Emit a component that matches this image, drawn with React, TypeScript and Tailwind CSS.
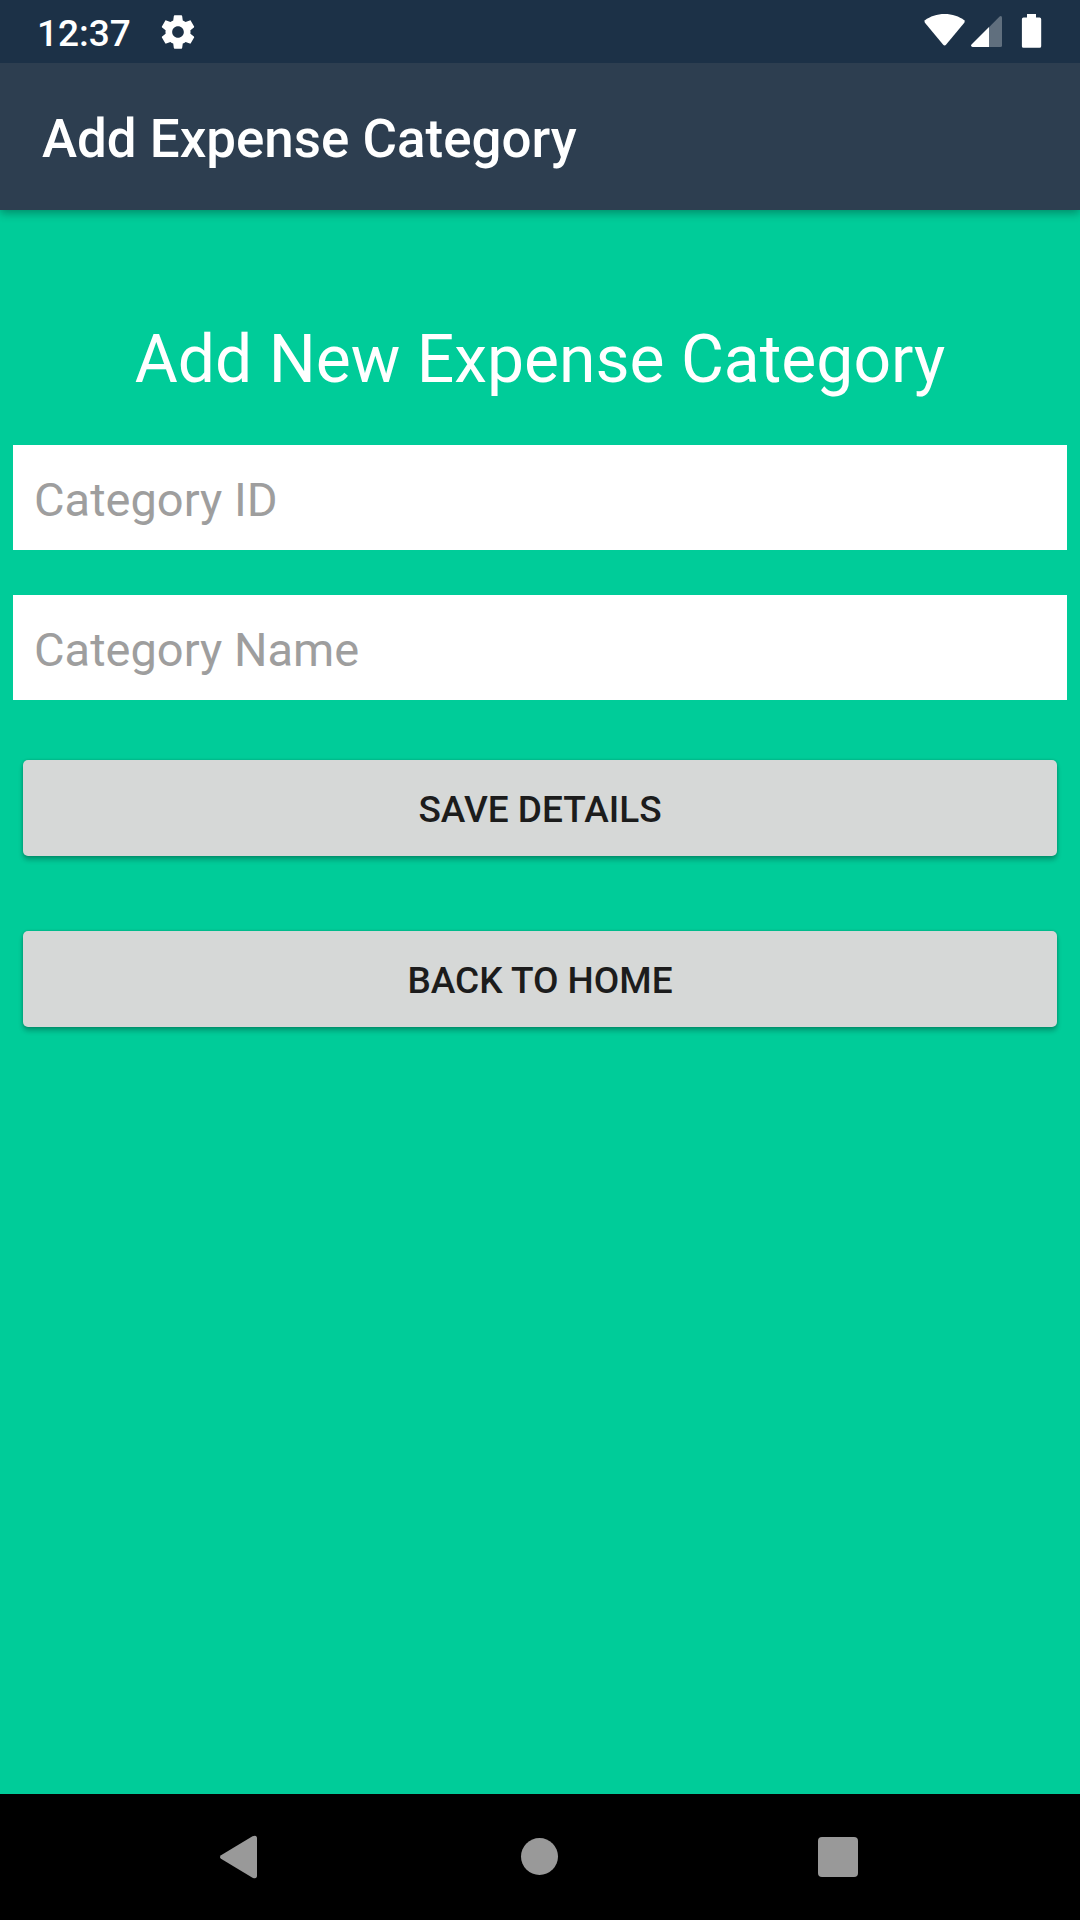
import React from "react";

function GearIcon() {
  return (
    <svg className="h-10 w-10" viewBox="0 0 24 24" fill="#fff">
      <path d="M19.43 12.98c.04-.32.07-.64.07-.98s-.03-.66-.07-.98l2.11-1.65c.19-.15.24-.42.12-.64l-2-3.46c-.12-.22-.39-.3-.61-.22l-2.49 1c-.52-.4-1.08-.73-1.69-.98l-.38-2.65C14.46 2.18 14.25 2 14 2h-4c-.25 0-.46.18-.49.42l-.38 2.65c-.61.25-1.17.59-1.69.98l-2.49-1c-.23-.09-.49 0-.61.22l-2 3.46c-.13.22-.07.49.12.64l2.11 1.65c-.04.32-.07.65-.07.98s.03.66.07.98l-2.11 1.65c-.19.15-.24.42-.12.64l2 3.46c.12.22.39.3.61.22l2.49-1c.52.4 1.08.73 1.69.98l.38 2.65c.03.24.24.42.49.42h4c.25 0 .46-.18.49-.42l.38-2.65c.61-.25 1.17-.59 1.69-.98l2.49 1c.23.09.49 0 .61-.22l2-3.46c.12-.22.07-.49-.12-.64l-2.11-1.65zM12 15.5c-1.93 0-3.5-1.57-3.5-3.5s1.57-3.5 3.5-3.5 3.5 1.57 3.5 3.5-1.57 3.5-3.5 3.5z" />
    </svg>
  );
}

function StatusIcons() {
  return (
    <svg className="h-[63px] w-[180px]" viewBox="900 0 180 63">
      <path
        d="M925 20.200C930 16.500 937 14 944.600 14S959.300 16.500 964.200 20.200Q965.200 21.400 964.300 22.800L946.200 44.600Q944.600 46.300 943 44.600L924.900 22.800Q924 21.400 925 20.200Z"
        fill="#fff"
      />
      <path d="M989 27.200L999.600 16.500Q1002 15.200 1002 18V45.500Q1002 47 1000.500 47H989Z" fill="#fff" fillOpacity="0.3" />
      <path d="M989 27V47H972.500Q970.200 46.300 971.500 44.500Z" fill="#fff" />
      <path d="M1027 14H1036V17.600H1039.600Q1041.200 17.600 1041.200 19.200V46.200Q1041.200 47.800 1039.600 47.800H1023.500Q1021.900 47.800 1021.900 46.200V19.200Q1021.900 17.600 1023.500 17.600H1027Z" fill="#fff" />
    </svg>
  );
}

function Field({ label }: { label: string }) {
  return (
    <input
      placeholder={label}
      className="block h-[105px] w-full rounded-none bg-white pl-[21px] pt-[3px] text-[47px] text-black outline-none placeholder:text-[#9e9e9e] placeholder:opacity-100"
    />
  );
}

function ActionButton({ label }: { label: string }) {
  return (
    <button className="flex h-24 w-full items-center justify-center rounded-[5px] bg-[#d6d8d7] pt-[3px] text-[37px] font-medium leading-none text-[#1c1c1c] shadow-[0_4px_5px_rgba(0,0,0,0.24),0_0_3px_rgba(0,0,0,0.2)]">
      {label}
    </button>
  );
}

export default function App() {
  return (
    <div className="flex h-[1920px] w-[1080px] flex-col overflow-hidden bg-[#00cc99] font-[Roboto,sans-serif]">
      <header className="shrink-0 shadow-[0_3px_9px_rgba(0,0,0,0.32)]">
        <div className="flex h-[63px] items-center bg-[#1c3147]">
          <span className="w-[121px] pl-[37px] pt-[4px] text-[37px] font-medium leading-none text-white">12:37</span>
          <div className="ml-[37px]">
            <GearIcon />
          </div>
          <div className="ml-auto">
            <StatusIcons />
          </div>
        </div>
        <div className="flex h-[147px] items-center bg-[#2d3e50] pl-[42px] pt-[6px]">
          <h1 className="text-[52.9px] font-medium leading-none text-white">Add Expense Category</h1>
        </div>
      </header>

      <main className="flex flex-1 flex-col px-[13px] pt-[111px]">
        <h2 className="h-[124px] whitespace-nowrap text-center text-[66px] leading-[78px] text-white">
          Add New Expense Category
        </h2>
        <div className="flex flex-col gap-[45px]">
          <Field label="Category ID" />
          <Field label="Category Name" />
        </div>
        <div className="mt-[60px] flex flex-col gap-[75px] px-[10px]">
          <ActionButton label="SAVE DETAILS" />
          <ActionButton label="BACK TO HOME" />
        </div>
      </main>

      <nav className="flex h-[126px] shrink-0 items-center bg-black">
        <svg className="h-[126px] w-full" viewBox="0 1794 1080 126" fill="#999">
          <path d="M221 1855.200L252.500 1836.300Q257 1834.500 257 1838.500V1875.500Q257 1879.500 252.500 1877.700L221 1858.800Q219 1857 221 1855.200Z" />
          <circle cx="539.500" cy="1856.500" r="18.500" />
          <rect x="818" y="1837" width="40" height="40" rx="4" />
        </svg>
      </nav>
    </div>
  );
}
